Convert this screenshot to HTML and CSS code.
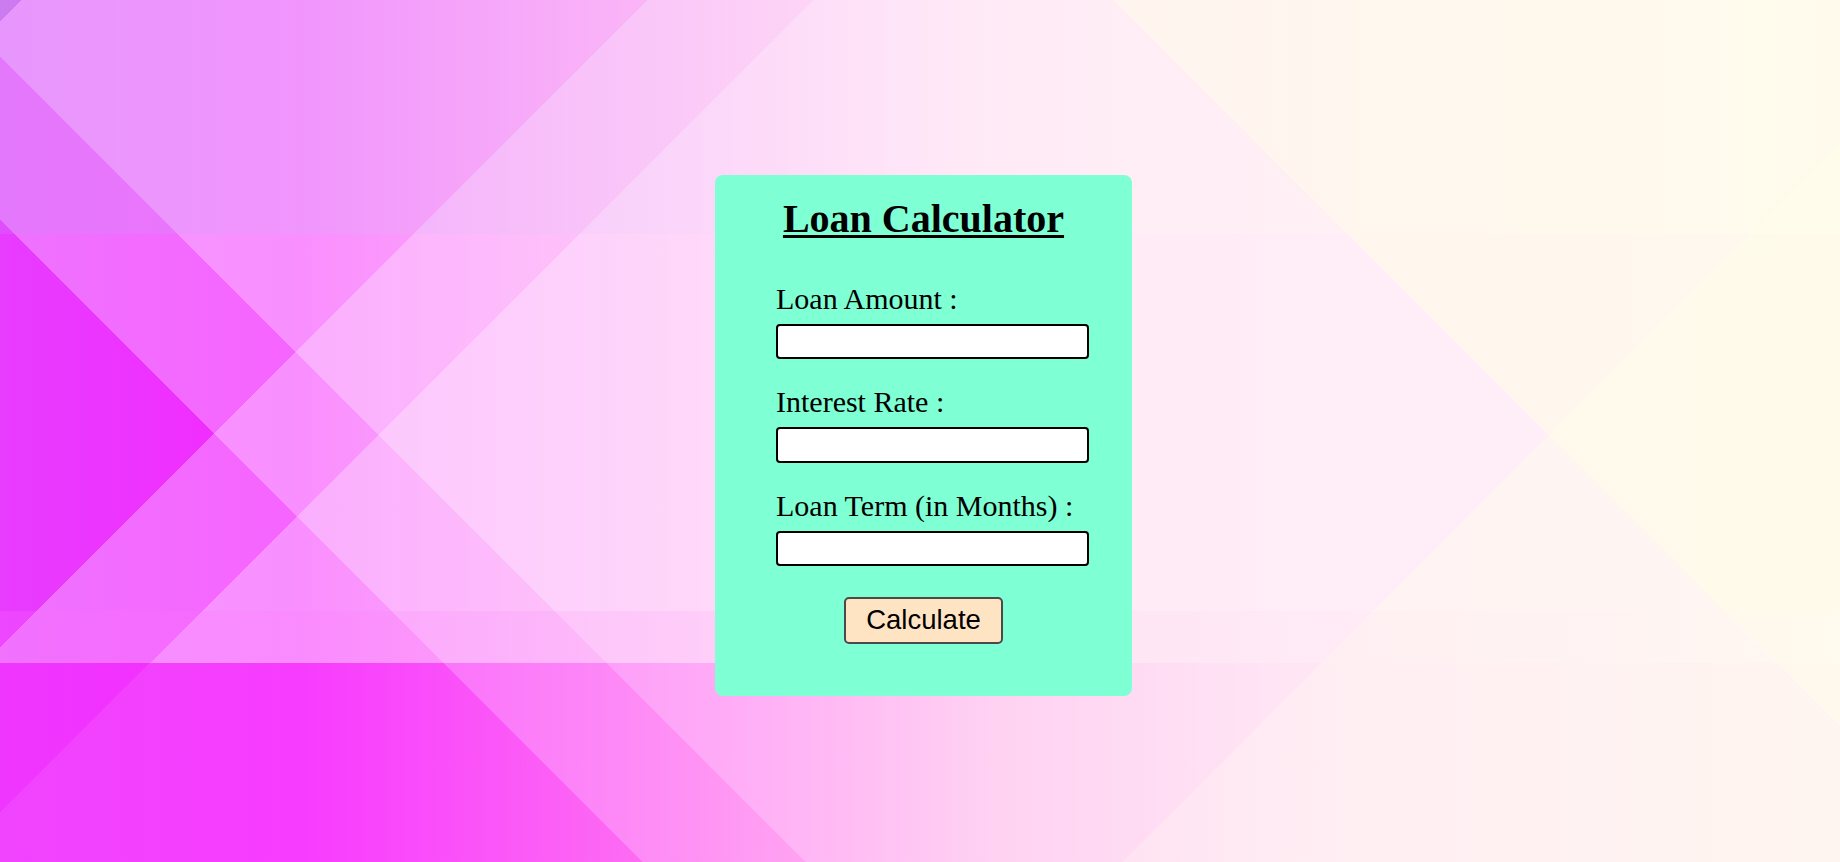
FILE: index.html
```html
<!DOCTYPE html>
<html lang="en">
<head>
<meta charset="utf-8">
<title>Loan Calculator</title>
<link rel="stylesheet" href="styles.css">
</head>
<body>
<div class="page">
  <div class="card">
    <h1 class="title">Loan Calculator</h1>
    <form class="form">
      <div class="group">
        <label class="label" for="amount">Loan Amount :</label>
        <input class="field" id="amount" type="text">
      </div>
      <div class="group">
        <label class="label" for="rate">Interest Rate :</label>
        <input class="field" id="rate" type="text">
      </div>
      <div class="group">
        <label class="label" for="term">Loan Term (in Months) :</label>
        <input class="field" id="term" type="text">
      </div>
      <div class="actions">
        <button class="btn" type="button">Calculate</button>
      </div>
    </form>
  </div>
</div>
</body>
</html>
```

FILE: styles.css
```css
html, body {
  margin: 0;
  padding: 0;
}

body {
  font-family: "Liberation Serif", "Times New Roman", serif;
  color: #000;
}

.page {
  box-sizing: border-box;
  width: 100%;
  height: 100vh;
  display: flex;
  align-items: center;
  justify-content: center;
  padding: 9px 0 0 7px;
  background-color: #f9a0f5;
  background-image:
    /* tiny top-left corner */
    linear-gradient(135deg, rgba(140, 60, 210, 0.3) 15.5px, transparent 15.5px),
    /* horizontal strips */
    linear-gradient(to right, rgba(190, 140, 245, 0.22), rgba(255, 235, 250, 0.22) 50%, rgba(255, 255, 235, 0.45)),
    linear-gradient(to right, rgba(255, 110, 255, 0.22), rgba(255, 160, 240, 0.12) 900px, rgba(255, 250, 242, 0.4) 1840px),
    linear-gradient(to right, rgba(255, 40, 255, 0.3) 0px, rgba(255, 90, 255, 0.15) 800px, rgba(255, 242, 250, 0.35) 1300px, rgba(255, 250, 240, 0.55) 1840px),
    /* weaker L4 overlay inside bottom strip */
    linear-gradient(135deg, transparent 105.9px, rgba(255, 255, 255, 0.1) 105.9px),
    /* cream overlays on the right */
    linear-gradient(45deg, transparent 1397px, rgba(255, 255, 228, 0.5) 1397px),
    linear-gradient(135deg, transparent 1403.6px, rgba(255, 255, 232, 0.35) 1403.6px),
    /* white diagonal overlays */
    linear-gradient(45deg, transparent 569.9px, rgba(255, 255, 255, 0.28) 569.9px),
    linear-gradient(45deg, transparent 454px, rgba(255, 255, 255, 0.28) 454px),
    linear-gradient(135deg, transparent 574.9px, rgba(255, 255, 255, 0.28) 574.9px),
    linear-gradient(135deg, transparent 458.2px, rgba(255, 255, 255, 0.28) 458.2px),
    /* base */
    linear-gradient(to right, #e83cff 0px, #f428ff 300px, #ff6eec 700px, #ffb0dd 1000px, #ffc0e5 1400px, #ffcce0 1840px);
  background-size:
    100% 100%,
    100% 234px,
    100% 52px,
    100% 199px,
    100% 199px,
    100% 100%,
    100% 100%,
    100% 100%,
    100% 100%,
    100% 663px,
    100% 663px,
    100% 100%;
  background-position:
    0 0,
    0 0,
    0 611px,
    0 663px,
    0 663px,
    0 0,
    0 0,
    0 0,
    0 0,
    0 0,
    0 0,
    0 0;
  background-repeat: no-repeat;
}

.card {
  box-sizing: border-box;
  width: 417px;
  background: #7fffd4;
  border-radius: 8px;
  padding: 22px 0 52px 0;
}

.title {
  margin: 0;
  font-size: 40px;
  line-height: 44px;
  font-weight: bold;
  text-align: center;
  text-decoration: underline;
  text-decoration-thickness: 3px;
  text-underline-offset: 3px;
}

.form {
  margin: 40.5px 0 0 0;
  padding: 0 0 0 61px;
}

.group {
  display: flex;
  flex-direction: column;
  align-items: flex-start;
  margin-bottom: 26px;
}

.label {
  display: block;
  font-size: 30px;
  line-height: 34px;
  margin-bottom: 8px;
}

.field {
  box-sizing: border-box;
  width: 313px;
  height: 35.5px;
  margin: 0;
  padding: 0 6px;
  background: #fff;
  border: 2px solid #000;
  border-radius: 4px;
  font-family: "Liberation Sans", Arial, sans-serif;
  font-size: 20px;
}

.actions {
  display: flex;
  justify-content: center;
  margin: 30.7px 0 0 -61px;
}

.btn {
  box-sizing: border-box;
  height: 47px;
  margin: 0;
  padding: 0 20.5px;
  background: #ffe4c4;
  border: 2px solid #4a4a4a;
  border-radius: 5px;
  font-family: "Liberation Sans", Arial, sans-serif;
  font-size: 27.5px;
  line-height: 32px;
  color: #000;
}
```
